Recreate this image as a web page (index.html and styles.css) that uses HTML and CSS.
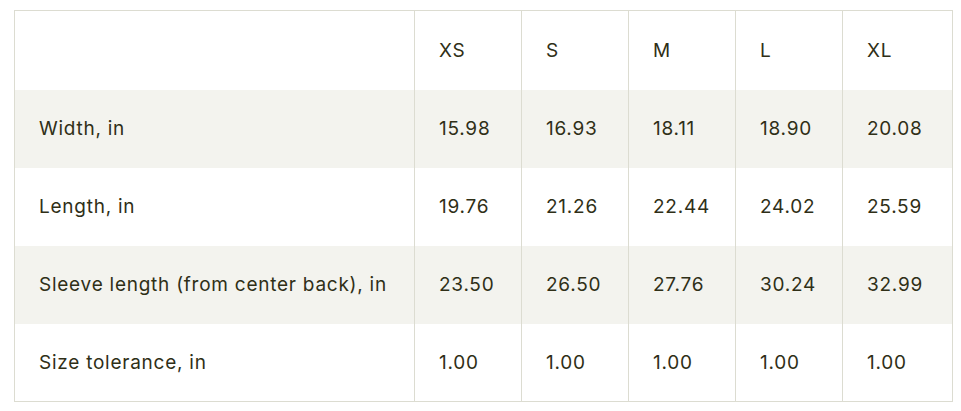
FILE: index.html
```html
<!DOCTYPE html>
<html>
<head>
<meta charset="utf-8">
<link rel="stylesheet" href="styles.css">
</head>
<body>
<table class="size-table">
  <colgroup>
    <col class="c-label"><col class="c-size"><col class="c-size"><col class="c-size"><col class="c-size"><col class="c-size-last">
  </colgroup>
  <thead>
    <tr class="head"><th></th><th>XS</th><th>S</th><th>M</th><th>L</th><th>XL</th></tr>
  </thead>
  <tbody>
    <tr class="shade"><td>Width, in</td><td>15.98</td><td>16.93</td><td>18.11</td><td>18.90</td><td>20.08</td></tr>
    <tr><td>Length, in</td><td>19.76</td><td>21.26</td><td>22.44</td><td>24.02</td><td>25.59</td></tr>
    <tr class="shade"><td>Sleeve length (from center back), in</td><td>23.50</td><td>26.50</td><td>27.76</td><td>30.24</td><td>32.99</td></tr>
    <tr><td>Size tolerance, in</td><td>1.00</td><td>1.00</td><td>1.00</td><td>1.00</td><td>1.00</td></tr>
  </tbody>
</table>
</body>
</html>
```
FILE: styles.css
```css
html, body {
  margin: 0;
  background: #ffffff;
}
body {
  padding: 10px 0 0 14px;
  font-family: "Inter", "Liberation Sans", sans-serif;
  color: #2f2f17;
}
.size-table {
  border-collapse: collapse;
  table-layout: fixed;
  width: 938px;
  border: 1px solid #dcdcd1;
  font-size: 19px;
  letter-spacing: 0.75px;
}
.c-label { width: 400px; }
.c-size { width: 107px; }
.c-size-last { width: 110px; }
.size-table th,
.size-table td {
  text-align: left;
  font-weight: 400;
  padding: 0 0 0 24px;
  vertical-align: middle;
  border-left: 1px solid #dcdcd1;
  white-space: nowrap;
}
.size-table tr { height: 78px; }
.size-table tr.head { height: 79px; }
.size-table tr.shade { background: #f3f3ee; }
```
